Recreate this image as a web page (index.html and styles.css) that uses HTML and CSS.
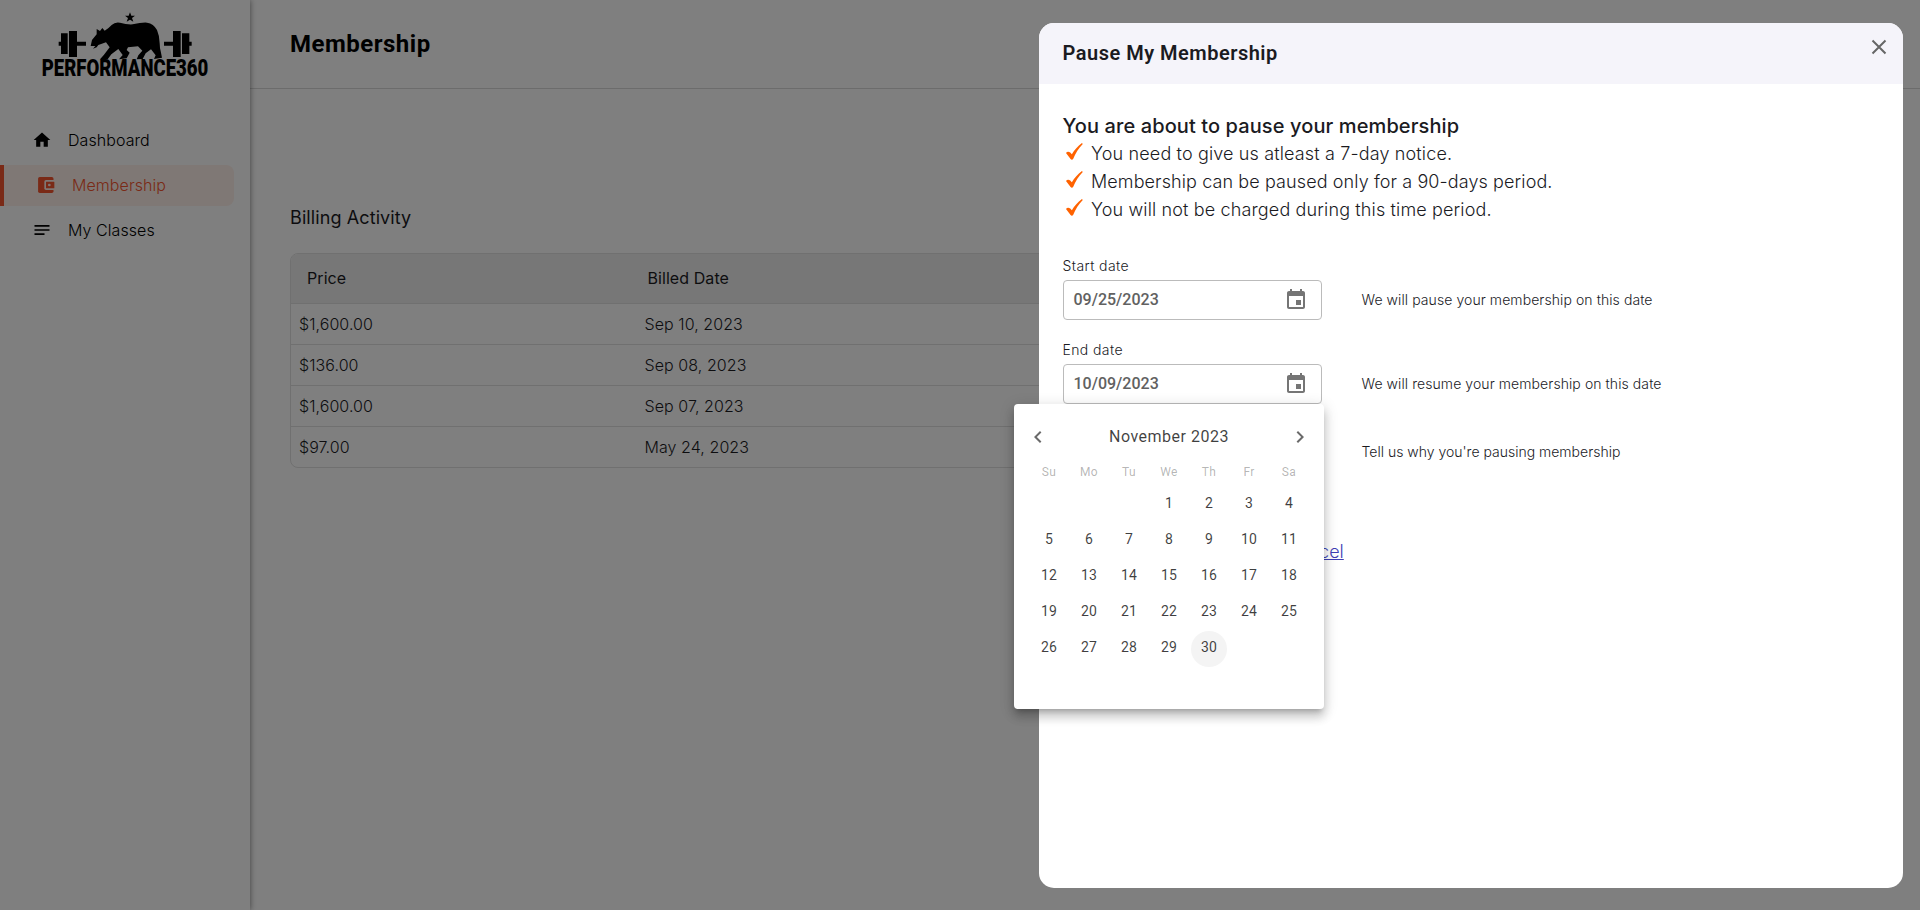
FILE: index.html
```html
<!DOCTYPE html>
<html lang="en">
<head>
<meta charset="utf-8">
<title>Membership</title>
<link rel="stylesheet" href="styles.css">
</head>
<body>
<div class="app">
  <aside class="sidebar">
    <svg class="logo" width="250" height="78" viewBox="0 0 750 234">
      <path d="M390 37l4 10h11l-9 7 4 11-10-6-10 6 4-11-9-7h11z"/>
      <path d="M183 100h20v62h-20zM207 93h24v78h-24zM176 125h8v12h-8zM231 125h27v12h-27zM492 125h27v12h-27zM519 93h23v78h-23zM546 100h22v62h-22zM567 125h8v12h-8z"/>
      <path d="M272 138L276 120L290 103L290 87L300 93L307 84L314 92Q326 85 335 75Q345 65 360 68Q380 74 398 73Q425 67 441 68Q461 71 471 90Q479 108 479 130Q479 144 483 158L486 173L462 177L467 166L453 148L437 160L428 177L410 178L415 166L427 152L414 139L384 142L380 150L389 158L380 175L357 178L368 165L355 147L334 163L323 178L300 178L312 164L329 142L318 127L295 135L290 142L279 146L286 138Z"/>
      <text class="logo-text" x="125" y="228" textLength="500" lengthAdjust="spacingAndGlyphs">PERFORMANCE360</text>
    </svg>
    <nav class="nav">
      <a class="nav-item"><svg width="20" height="20" viewBox="0 0 24 24"><path d="M10 20v-6h4v6h5v-8h3L12 3 2 12h3v8z"/></svg><span>Dashboard</span></a>
      <a class="nav-item active"><svg width="20" height="20" viewBox="0 0 24 24"><rect x="2.500" y="2.500" width="18.500" height="19" rx="2"/><rect class="hole" x="10" y="6" width="14" height="12" rx="2"/><rect x="12" y="8" width="10" height="8" rx=".5"/><circle class="hole" cx="16" cy="12" r="1.600"/></svg><span>Membership</span></a>
      <a class="nav-item"><svg width="20" height="20" viewBox="0 0 24 24"><path d="M3 18h12v-2H3v2zM3 6v2h18V6H3zm0 7h18v-2H3v2z"/></svg><span>My Classes</span></a>
    </nav>
  </aside>
  <main class="main">
    <header class="topbar"><h1>Membership</h1></header>
    <section class="billing">
      <h2>Billing Activity</h2>
      <div class="table">
        <div class="row head"><span>Price</span><span>Billed Date</span></div>
        <div class="row"><span>$1,600.00</span><span>Sep 10, 2023</span></div>
        <div class="row"><span>$136.00</span><span>Sep 08, 2023</span></div>
        <div class="row"><span>$1,600.00</span><span>Sep 07, 2023</span></div>
        <div class="row"><span>$97.00</span><span>May 24, 2023</span></div>
      </div>
    </section>
  </main>
</div>
<div class="backdrop"></div>
<section class="dialog">
  <header class="dialog-head">
    <h3>Pause My Membership</h3>
    <svg class="close" width="24" height="24" viewBox="0 0 24 24"><path d="M5.500 5.500l13 13M18.500 5.500l-13 13"/></svg>
  </header>
  <div class="dialog-body">
    <h4>You are about to pause your membership</h4>
    <ul class="rules">
      <li><svg width="17" height="17" viewBox="0 0 16 16"><path d="M0 9.500C1 8 2.500 8 4 9l1.500 1.500C8 6.500 11 3 15 0l.8 1C12 5 9 9.500 6.700 15c-.7.900-1.700.9-2.400 0z"/></svg><span class="wide">You need to give us atleast a 7-day notice.</span></li>
      <li><svg width="17" height="17" viewBox="0 0 16 16"><path d="M0 9.500C1 8 2.500 8 4 9l1.500 1.500C8 6.500 11 3 15 0l.8 1C12 5 9 9.500 6.700 15c-.7.900-1.700.9-2.400 0z"/></svg><span>Membership can be paused only for a 90-days period.</span></li>
      <li><svg width="17" height="17" viewBox="0 0 16 16"><path d="M0 9.500C1 8 2.500 8 4 9l1.500 1.500C8 6.500 11 3 15 0l.8 1C12 5 9 9.500 6.700 15c-.7.900-1.700.9-2.400 0z"/></svg><span class="wide">You will not be charged during this time period.</span></li>
    </ul>
    <div class="field-row">
      <div class="field"><label>Start date</label>
        <div class="input"><span>09/25/2023</span><svg width="24" height="24" viewBox="0 0 24 24"><path d="M17 12h-5v5h5v-5zM16 1v2H8V1H6v2H5c-1.110 0-1.990.9-1.990 2L3 19c0 1.100.89 2 2 2h14c1.100 0 2-.9 2-2V5c0-1.100-.9-2-2-2h-1V1h-2zm3 18H5V8h14v11z"/></svg></div></div>
      <p class="hint">We will pause your membership on this date</p>
    </div>
    <div class="field-row">
      <div class="field"><label>End date</label>
        <div class="input"><span>10/09/2023</span><svg width="24" height="24" viewBox="0 0 24 24"><path d="M17 12h-5v5h5v-5zM16 1v2H8V1H6v2H5c-1.110 0-1.990.9-1.990 2L3 19c0 1.100.89 2 2 2h14c1.100 0 2-.9 2-2V5c0-1.100-.9-2-2-2h-1V1h-2zm3 18H5V8h14v11z"/></svg></div></div>
      <p class="hint">We will resume your membership on this date</p>
    </div>
    <p class="hint reason">Tell us why you're pausing membership</p>
    <div class="actions"><a class="cancel">Cancel</a></div>
  </div>
</section>
<section class="calendar">
  <header class="cal-head">
    <svg width="24" height="24" viewBox="0 0 24 24"><path d="M15.410 16.590L10.830 12l4.580-4.590L14 6l-6 6 6 6 1.410-1.410z"/></svg>
    <span>November 2023</span>
    <svg width="24" height="24" viewBox="0 0 24 24"><path d="M8.590 16.590L13.170 12 8.590 7.410 10 6l6 6-6 6-1.410-1.410z"/></svg>
  </header>
  <div class="grid week"><span>Su</span><span>Mo</span><span>Tu</span><span>We</span><span>Th</span><span>Fr</span><span>Sa</span></div>
  <div class="grid days">
    <span class="first">1</span><span>2</span><span>3</span><span>4</span>
    <span>5</span><span>6</span><span>7</span><span>8</span><span>9</span><span>10</span><span>11</span>
    <span>12</span><span>13</span><span>14</span><span>15</span><span>16</span><span>17</span><span>18</span>
    <span>19</span><span>20</span><span>21</span><span>22</span><span>23</span><span>24</span><span>25</span>
    <span>26</span><span>27</span><span>28</span><span>29</span><span class="hover">30</span>
  </div>
</section>
</body>
</html>
```

FILE: styles.css
```css
* { box-sizing: border-box; }
body { margin: 0; height: 910px; overflow: hidden; font-family: Inter, sans-serif; background: #fff; color: #1b1b1f; }
h1, h2, h3, h4, p, ul { margin: 0; padding: 0; }
.app { display: flex; height: 910px; }

.sidebar { width: 250px; flex: none; box-shadow: 0 0 6px rgba(0,0,0,.5); z-index: 1; }
.logo { display: block; overflow: visible; }
.logo-text { font: 900 69px Roboto, sans-serif; }
.nav { margin-top: 42px; }
.nav-item { display: flex; align-items: center; height: 41px; width: 234px; margin-bottom: 4px; padding: 0 0 2px 32px; gap: 16px; font-size: 16px; letter-spacing: .07px; font-weight: 300; color: #000; }
.nav-item.active { color: #f4552f; fill: #f4552f; background: linear-gradient(#f4552f, #f4552f) 0 0 / 4px 100% no-repeat, #fff0ea; border-radius: 0 8px 8px 0; padding-left: 36px; }
.hole { fill: #fff0ea; }

.main { flex: 1; }
.topbar { height: 89px; border-bottom: 1px solid #d9d9d9; padding: 30px 40px; }
h1 { font: 700 24px/28px Roboto, sans-serif; letter-spacing: .5px; color: #000; }
.billing { padding: 117px 17px 0 40px; }
h2 { font-size: 18px; line-height: 24px; font-weight: 400; letter-spacing: .1px; }
.table { margin-top: 23px; border: 1px solid #e0e0e0; border-radius: 8px; overflow: hidden; }
.row { display: grid; grid-template-columns: 345.500px 1fr; height: 41px; align-items: center; padding-left: 8px; font-size: 16px; letter-spacing: .07px; font-weight: 300; border-top: 1px solid #e0e0e0; }
.row.head { height: 49px; padding: 0 0 1px 16px; grid-template-columns: 340.500px 1fr; background: #eee; font-weight: 400; border: 0; }

.backdrop { position: absolute; inset: 0; background: rgba(0,0,0,.5); z-index: 2; }
.dialog { position: absolute; z-index: 3; left: 1038.500px; top: 22.500px; width: 864.500px; height: 865px; background: #fff; border-radius: 15px; overflow: hidden; }
.dialog-head { display: flex; justify-content: space-between; height: 61.500px; background: #f5f4fa; padding: 12px 12px 0 24px; }
h3 { font: 600 20px/36px Roboto, sans-serif; letter-spacing: .5px; }
.close { fill: none; stroke: #666; stroke-width: 2; }
.dialog-body { padding: 28px 24px; }
h4 { font-size: 20px; line-height: 28px; font-weight: 500; letter-spacing: .1px; }
.rules { list-style: none; margin-top: -1px; }
.rules li { display: flex; align-items: center; height: 28px; font-size: 18px; font-weight: 300; letter-spacing: .1px; }
.rules li .wide { letter-spacing: .14px; }
.rules svg { margin: -4px 8px 0 3.500px; fill: #ff6200; }
.field-row { display: flex; gap: 40px; height: 84px; }
.rules + .field-row { margin-top: 32.500px; }
.field { width: 259px; }
label { display: block; font-size: 14px; line-height: 20px; letter-spacing: .4px; margin-bottom: 4px; font-weight: 300; }
.input { height: 40px; border: 1px solid #bbb; border-radius: 4px; display: flex; justify-content: space-between; align-items: center; padding: 0 13px 0 10px; font: 500 16px Roboto, sans-serif; color: #616161; fill: #757575; }
.hint { font-size: 14px; line-height: 20px; font-weight: 300; letter-spacing: .08px; padding-top: 34px; }
.reason { margin-left: 299px; padding-top: 18px; letter-spacing: 0; }
.actions { margin: 78px 0 0 223px; }
.cancel { font-size: 18px; line-height: 24px; font-weight: 300; color: #3f3fb5; text-decoration: underline; }

.calendar { position: absolute; z-index: 4; left: 1014px; top: 404px; width: 310px; height: 305px; background: #fff; border-radius: 4px; box-shadow: 0 5px 5px -3px rgba(0,0,0,.2), 0 8px 10px 1px rgba(0,0,0,.14), 0 3px 14px 2px rgba(0,0,0,.12); font-family: Roboto, sans-serif; color: rgba(0,0,0,.75); }
.cal-head { display: flex; align-items: center; justify-content: space-between; padding: 0 12px; height: 65px; font-size: 16px; letter-spacing: .5px; fill: #6a6a6a; }
.grid { display: grid; grid-template-columns: repeat(7, 40px); padding-left: 15px; text-align: center; }
.week { font-size: 12px; line-height: 16px; margin-top: -5px; letter-spacing: .3px; color: rgba(0,0,0,.3); }
.days { margin-top: 7px; font-size: 14px; line-height: 33px; letter-spacing: .2px; justify-items: center; }
.days span { width: 36px; height: 36px; border-radius: 50%; }
.first { grid-column: 4; }
.days .hover { background: #f4f4f4; }
```
